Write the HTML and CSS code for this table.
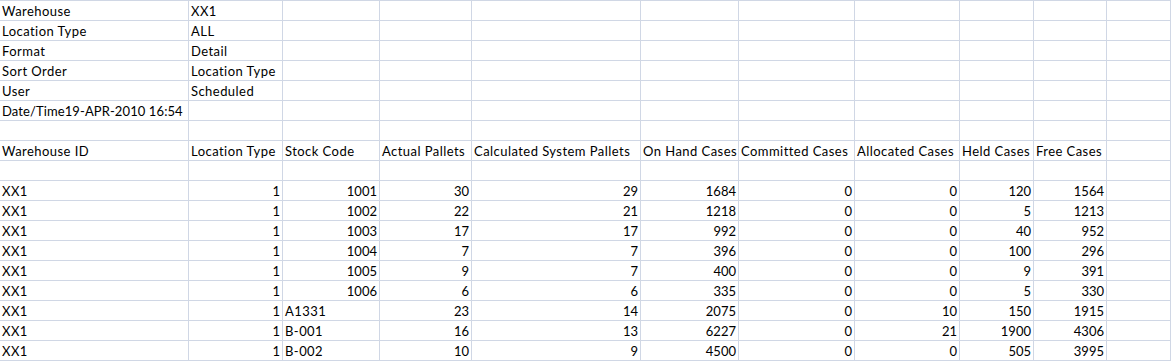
FILE: index.html
```html
<!DOCTYPE html>
<html>
<head>
<meta charset="utf-8">
<link rel="stylesheet" href="styles.css">
</head>
<body>
<div class="sheet">
  <div class="c">Warehouse</div><div class="c">XX1</div><div class="c"></div><div class="c"></div><div class="c"></div><div class="c"></div><div class="c"></div><div class="c"></div><div class="c"></div><div class="c"></div><div class="c"></div>
  <div class="c">Location Type</div><div class="c">ALL</div><div class="c"></div><div class="c"></div><div class="c"></div><div class="c"></div><div class="c"></div><div class="c"></div><div class="c"></div><div class="c"></div><div class="c"></div>
  <div class="c">Format</div><div class="c">Detail</div><div class="c"></div><div class="c"></div><div class="c"></div><div class="c"></div><div class="c"></div><div class="c"></div><div class="c"></div><div class="c"></div><div class="c"></div>
  <div class="c">Sort Order</div><div class="c">Location Type</div><div class="c"></div><div class="c"></div><div class="c"></div><div class="c"></div><div class="c"></div><div class="c"></div><div class="c"></div><div class="c"></div><div class="c"></div>
  <div class="c">User</div><div class="c">Scheduled</div><div class="c"></div><div class="c"></div><div class="c"></div><div class="c"></div><div class="c"></div><div class="c"></div><div class="c"></div><div class="c"></div><div class="c"></div>
  <div class="c dt">Date/Time19-APR-2010 16:54</div><div class="c"></div><div class="c"></div><div class="c"></div><div class="c"></div><div class="c"></div><div class="c"></div><div class="c"></div><div class="c"></div><div class="c"></div><div class="c"></div>
  <div class="c"></div><div class="c"></div><div class="c"></div><div class="c"></div><div class="c"></div><div class="c"></div><div class="c"></div><div class="c"></div><div class="c"></div><div class="c"></div><div class="c"></div>
  <div class="c">Warehouse ID</div><div class="c">Location Type</div><div class="c">Stock Code</div><div class="c">Actual Pallets</div><div class="c">Calculated System Pallets</div><div class="c">On Hand Cases</div><div class="c">Committed Cases</div><div class="c">Allocated Cases</div><div class="c">Held Cases</div><div class="c">Free Cases</div><div class="c"></div>
  <div class="c"></div><div class="c"></div><div class="c"></div><div class="c"></div><div class="c"></div><div class="c"></div><div class="c"></div><div class="c"></div><div class="c"></div><div class="c"></div><div class="c"></div>
  <div class="c">XX1</div><div class="c n">1</div><div class="c n">1001</div><div class="c n">30</div><div class="c n">29</div><div class="c n">1684</div><div class="c n">0</div><div class="c n">0</div><div class="c n">120</div><div class="c n">1564</div><div class="c"></div>
  <div class="c">XX1</div><div class="c n">1</div><div class="c n">1002</div><div class="c n">22</div><div class="c n">21</div><div class="c n">1218</div><div class="c n">0</div><div class="c n">0</div><div class="c n">5</div><div class="c n">1213</div><div class="c"></div>
  <div class="c">XX1</div><div class="c n">1</div><div class="c n">1003</div><div class="c n">17</div><div class="c n">17</div><div class="c n">992</div><div class="c n">0</div><div class="c n">0</div><div class="c n">40</div><div class="c n">952</div><div class="c"></div>
  <div class="c">XX1</div><div class="c n">1</div><div class="c n">1004</div><div class="c n">7</div><div class="c n">7</div><div class="c n">396</div><div class="c n">0</div><div class="c n">0</div><div class="c n">100</div><div class="c n">296</div><div class="c"></div>
  <div class="c">XX1</div><div class="c n">1</div><div class="c n">1005</div><div class="c n">9</div><div class="c n">7</div><div class="c n">400</div><div class="c n">0</div><div class="c n">0</div><div class="c n">9</div><div class="c n">391</div><div class="c"></div>
  <div class="c">XX1</div><div class="c n">1</div><div class="c n">1006</div><div class="c n">6</div><div class="c n">6</div><div class="c n">335</div><div class="c n">0</div><div class="c n">0</div><div class="c n">5</div><div class="c n">330</div><div class="c"></div>
  <div class="c">XX1</div><div class="c n">1</div><div class="c">A1331</div><div class="c n">23</div><div class="c n">14</div><div class="c n">2075</div><div class="c n">0</div><div class="c n">10</div><div class="c n">150</div><div class="c n">1915</div><div class="c"></div>
  <div class="c">XX1</div><div class="c n">1</div><div class="c">B-001</div><div class="c n">16</div><div class="c n">13</div><div class="c n">6227</div><div class="c n">0</div><div class="c n">21</div><div class="c n">1900</div><div class="c n">4306</div><div class="c"></div>
  <div class="c">XX1</div><div class="c n">1</div><div class="c">B-002</div><div class="c n">10</div><div class="c n">9</div><div class="c n">4500</div><div class="c n">0</div><div class="c n">0</div><div class="c n">505</div><div class="c n">3995</div><div class="c"></div>
</div>
</body>
</html>
```
FILE: styles.css
```css
html, body {
  margin: 0;
  padding: 0;
  background: #ffffff;
}

.sheet {
  display: grid;
  grid-template-columns: 189px 94px 97px 92px 169px 98px 116px 105px 74px 73px 64px;
  grid-auto-rows: 20px;
  border-top: 1px solid #d0d7e5;
  font-family: Lato, "Open Sans", sans-serif;
  font-size: 13px;
  letter-spacing: 0.45px;
  color: #000000;
}

.c {
  box-sizing: border-box;
  border-right: 1px solid #d0d7e5;
  border-bottom: 1px solid #d0d7e5;
  padding: 1px 2px 0 2px;
  line-height: 18px;
  white-space: nowrap;
  overflow: hidden;
  text-align: left;
}

.n {
  text-align: right;
  letter-spacing: 0;
  padding-right: 2px;
}

.dt {
  letter-spacing: 0.1px;
}
```
